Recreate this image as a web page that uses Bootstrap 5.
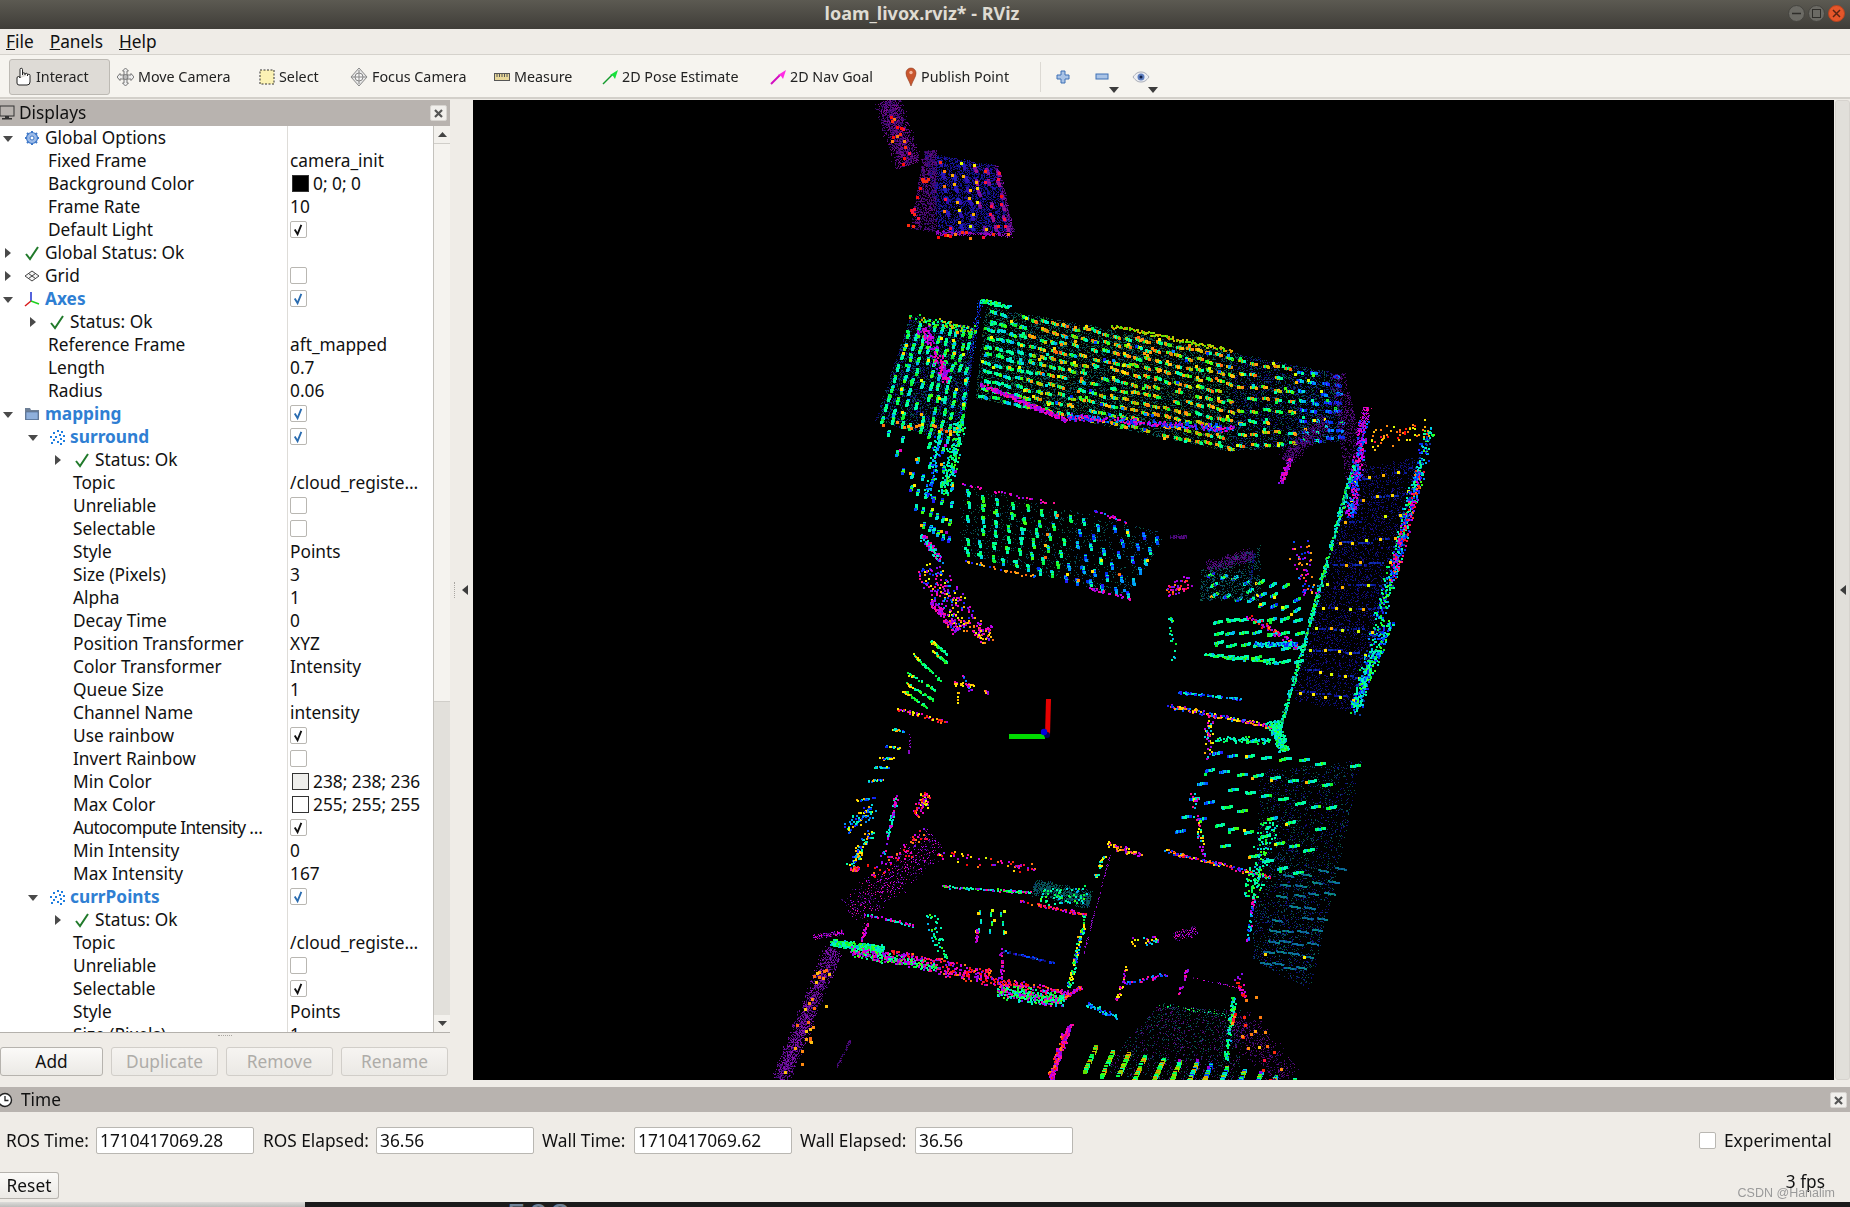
<!DOCTYPE html>
<html lang="en">
<head>
<meta charset="UTF-8">
<title>loam_livox.rviz* - RViz</title>
<link href="https://cdn.jsdelivr.net/npm/bootstrap@5.3.0/dist/css/bootstrap.min.css" rel="stylesheet">
<style>
    html, body { width: 1850px; height: 1207px; overflow: hidden; margin: 0; background: #1b1b1b; }
    body { font-family: "Noto Sans", "Liberation Sans", sans-serif; font-size: 17.3px; color: #111; }
    .flex-none { flex: none; }
    .qt-win { height: 1202px; background: #efece7; }
    .title-bar { height: 29px; background: linear-gradient(#5c5a52, #3f3d38); color: #dfdbd2; font-weight: 700; font-size: 18px; }
    .title-text { left: 0; right: 0; top: 0; line-height: 27px; text-align: center; transform: translateX(-3px); }
    .win-btn { width: 17px; height: 17px; border-radius: 50%; background: #6b6a64; border: 1px solid #45443f; color: #35342f; }
    .win-btn.is-close { background: #e5562a; border-color: #b8431f; }
    .win-btns { top: 5px; right: 5px; gap: 3px; }
    .menu-bar { height: 26px; border-bottom: 1px solid #d5d2cc; gap: 16px; padding-left: 6px; line-height: 25px; }
    .tool-bar { height: 44px; background: #f6f4ef; border-bottom: 2px solid #d3d0ca; padding: 4px 0 0 9px; font-size: 14.3px; color: #222; }
    .tool-btn { height: 36px; padding: 0; gap: 4px; white-space: nowrap; flex: none; }
    .tool-btn.is-on { width: 101px; padding-left: 5px; background: #dedbd6; border: 1px solid #bdbab4; border-radius: 3px; }
    .tb-move { width: 142px; margin-left: 7px; }
    .tb-select { width: 91px; } .tb-focus { width: 144px; } .tb-measure { width: 108px; }
    .tb-pose { width: 168px; } .tb-goal { width: 135px; } .tb-pin { width: 135px; }
    .tool-sep { width: 1px; height: 30px; background: #dcd9d3; margin-top: 3px; }
    .tb-plus { margin: 11px 0 0 15px; } .tb-minus { margin: 14px 0 0 25px; } .tb-eye { margin: 11px 0 0 23px; }
    .tb-d1 { left: 1109px; top: 32px; } .tb-d2 { left: 1148px; top: 32px; }
    .drop-tri { position: absolute; width: 0; height: 0; border-left: 5px solid transparent; border-right: 5px solid transparent; border-top: 6px solid #3c3c3c; }
    .main-row { height: 980px; margin-top: 1px; }
    .dock-left { width: 450px; }
    .dock-head { height: 26px; background: #b8b3af; line-height: 26px; }
    .dock-close { right: 3px; top: 5px; width: 17px; height: 16px; background: #f1efec; border: 1px solid #d8d5d1; border-radius: 2px; }
    .scr-ic { margin-left: -1px; }
    .tree-box { height: 907px; background: #fff; border-bottom: 1px solid #b4b1ac; overflow: hidden; }
    .tree-rows { width: 433px; }
    .tree-row { height: 23px; line-height: 23px; }
    .name-cell { width: 287px; white-space: nowrap; }
    .name-squeeze { letter-spacing: -.65px; }
    .val-cell { width: 146px; border-left: 1px solid #dedcd8; padding-left: 2px; white-space: nowrap; overflow: hidden; }
    .d0 { padding-left: 3px; } .d1 { padding-left: 28px; } .d2 { padding-left: 53px; }
    .p1 { padding-left: 48px; } .p2 { padding-left: 73px; }
    .tri-r, .tri-d { flex: none; width: 10px; height: 10px; position: relative; }
    .tri-r::after, .tri-d::after { content: ""; position: absolute; width: 0; height: 0; }
    .tri-r::after { left: 2px; top: 0; border-left: 6px solid #4a4a4a; border-top: 5px solid transparent; border-bottom: 5px solid transparent; }
    .tri-d::after { left: 0; top: 3px; border-top: 6px solid #4a4a4a; border-left: 5px solid transparent; border-right: 5px solid transparent; }
    .tree-icon { flex: none; width: 16px; height: 16px; margin-left: 11px; margin-right: 5px; }
    .is-blue { color: #2f7fd3; font-weight: 700; }
    .form-check-input.pchk { width: 17px; height: 17px; margin: 3px 0 0 0; border: 1px solid #b9b7b2; border-radius: 2px; background-color: #fff; display: block; opacity: 1; }
    .form-check-input.pchk:checked { background-color: #fff; border-color: #b9b7b2; background-size: 15px; background-image: url("data:image/svg+xml,%3csvg xmlns='http://www.w3.org/2000/svg' viewBox='0 0 16 16'%3e%3cpath fill='none' stroke='%23111' stroke-width='2' d='M4 8l3 5 4-10'/%3e%3c/svg%3e"); }
    .form-check-input.pchk.chk-blue:checked { background-image: url("data:image/svg+xml,%3csvg xmlns='http://www.w3.org/2000/svg' viewBox='0 0 16 16'%3e%3cpath fill='none' stroke='%232a6cb0' stroke-width='2' d='M4 8l3 5 4-10'/%3e%3c/svg%3e"); }
    .swatch { display: inline-block; flex: none; width: 17px; height: 17px; margin: 0 4px 0 2px; border: 1px solid #333; }
    .swatch-min { background: #eeeeec; }
    .vscroll { width: 17px; background: #e2e0db; border-left: 1px solid #c4c2bd; }
    .vs-arrow { height: 17px; background: #f3f1ed; flex: none; }
    .vs-thumb { height: 559px; background: #f5f3ef; border-bottom: 1px solid #d0cec9; border-top: 1px solid #d0cec9; }
    .grip-dots { height: 14px; }
    .grip-dots i { width: 14px; border-top: 1px dotted #a9a6a1; margin-top: 2px; }
    .qt-btn { height: 29px; padding: 0; font-size: 17.3px; line-height: 26px; background: linear-gradient(#fbfaf8, #ebe9e5); border: 1px solid #b6b3ae; border-radius: 3px; color: #111; }
    .qt-btn:disabled { opacity: 1; color: #aeaca8; background: linear-gradient(#f6f4f1, #ebe9e5); border-color: #d1cec9; }
    .add-btn { width: 103px; }
    .btn-strip { gap: 8px; } .btn-strip .btn:not(.add-btn) { width: 107px; }
    .side-split { width: 23px; }
    .side-split .tri-l, .right-split .tri-l { width: 0; height: 0; border-right: 6px solid #3c3c3c; border-top: 5px solid transparent; border-bottom: 5px solid transparent; }
    .side-split .tri-l { margin-left: 7px; }
    .split-dots { height: 16px; border-left: 1px dotted #a9a6a1; margin-left: 4px; }
    .right-split { width: 15px; margin-left: 1px; background: #e1dfda; border-radius: 3px; border: 1px solid #d6d3ce; }
    .view-3d { display: block; background: #000; }
    .time-head { height: 25px; margin-top: 7px; background: #b8b3af; line-height: 25px; }
    .clock-ic { margin-left: -2px; margin-right: 7px; }
    .time-row { height: 27px; margin-top: 15px; padding-left: 6px; white-space: nowrap; }
    .form-control.time-field { width: 158px; height: 27px; flex: none; padding: 0 3px; font-size: 17.3px; line-height: 25px; color: #111; border: 1px solid #b9b7b2; border-radius: 2px; font-family: inherit; }
    .lbl-a { width: 90px; } .lbl-b { width: 113px; margin-left: 9px; } .lbl-c { width: 92px; margin-left: 8px; } .lbl-d { width: 115px; margin-left: 8px; }
    .form-check-input.pchk.exp-chk { margin: 0 0 0 626px; flex: none; }
    .reset-row { height: 27px; margin-top: 18px; }
    .qt-btn.reset-btn { width: 59px; height: 27px; border-left: 0; border-radius: 0 3px 3px 0; line-height: 24px; }
    .fps-text { right: 25px; top: 1172px; line-height: 20px; }
    .water-mark { right: 15px; top: 1185px; font: 12.5px "Liberation Sans", sans-serif; color: #9a9a9a; line-height: 16px; }
    .desk-strip { height: 5px; overflow: hidden; }
    .desk-lite { width: 305px; background: linear-gradient(#dcdcda, #bdbdbb); }
    .desk-term { font: 34px/26px "Liberation Sans", sans-serif; letter-spacing: 3px; color: #6f8296; padding-left: 202px; background: #1b1b1b; }
</style>
</head>
<body>
<svg class="d-none" xmlns="http://www.w3.org/2000/svg">
    <defs>
        <linearGradient id="screenGrad" x1="0" x2="1" y1="0" y2="0"><stop offset="0" stop-color="#c33"/><stop offset=".5" stop-color="#6a6"/><stop offset="1" stop-color="#46c"/></linearGradient>
    </defs>
    <symbol id="ic-gear" viewBox="0 0 16 16"><circle cx="8" cy="8" r="5.5" fill="#9cbbe8" stroke="#3f78c8" stroke-width="1.2"/><circle cx="8" cy="8" r="2" fill="#fff" stroke="#3f78c8"/><path stroke="#3f78c8" stroke-width="2" d="M8 1v2M8 13v2M1 8h2M13 8h2M3 3l1.500 1.500M11.500 11.500L13 13M3 13l1.500-1.500M11.500 4.500L13 3"/></symbol>
    <symbol id="ic-check" viewBox="0 0 16 16"><path fill="none" stroke="#217a2b" stroke-width="2" d="M2 9l4 5 8-12"/></symbol>
    <symbol id="ic-grid" viewBox="0 0 16 16"><path fill="#f4f4f4" stroke="#444" d="M8 3l7 5-7 5-7-5zM4.500 5.500l7 5M11.500 5.500l-7 5"/></symbol>
    <symbol id="ic-axes" viewBox="0 0 16 16"><path stroke="#1c2fd0" stroke-width="1.500" d="M7 1v10"/><path stroke="#d81b1b" stroke-width="1.500" d="M7 10l-6 5"/><path stroke="#1ed11e" stroke-width="1.500" d="M7 10l8 3"/></symbol>
    <symbol id="ic-folder" viewBox="0 0 16 16"><path fill="#6d7f96" d="M1 2h5l1 2h8v10H1z"/><path fill="#8fb0dc" stroke="#4d6a92" stroke-width=".6" d="M2 6h12v7.500H2z"/></symbol>
    <symbol id="ic-cloud" viewBox="0 0 16 16"><path fill="#1f7ee0" d="M8 1h2v2H8zM12 2h2v2h-2zM4 3h2v2H4zM10 5h2v2h-2zM14 6h2v2h-2zM1 7h2v2H1zM6 7h2v2H6zM11 9h2v2h-2zM4 10h2v2H4zM14 11h2v2h-2zM8 12h2v2H8zM2 13h2v2H2zM11 14h2v2h-2z"/></symbol>
    <symbol id="ic-hand" viewBox="0 0 17 20"><path fill="#fff" stroke="#222" d="M5 11V2.500a1.200 1.200 0 0 1 2.500 0V8m0-1a1.200 1.200 0 0 1 2.500 0v1m0-.5a1.200 1.200 0 0 1 2.500 0V9m0-.5a1.200 1.200 0 0 1 2.500 0V15a3 3 0 0 1-3 3H4a2 2 0 0 1-2-2v-5a1.500 1.500 0 0 1 3 0"/></symbol>
    <symbol id="ic-move" viewBox="0 0 17 20"><path fill="#eee" stroke="#777" d="M8.500 1l3 3H10v4h4V6.500l3 3.500-3 3.500V12h-4v4h1.500l-3 3-3-3H7v-4H3v1.500L0 10l3-3.500V8h4V4H5.500z"/><circle cx="8.500" cy="10" r="2.500" fill="#bbb" stroke="#777"/></symbol>
    <symbol id="ic-select" viewBox="0 0 16 16"><rect x="1" y="1" width="14" height="14" fill="#fbf2b4" stroke="#333" stroke-dasharray="2 1.500"/></symbol>
    <symbol id="ic-focus" viewBox="0 0 18 20"><path fill="#e8e8e8" stroke="#888" d="M9 1l8 9-8 9-8-9z"/><circle cx="9" cy="10" r="4" fill="#f6f6f6" stroke="#888"/><path stroke="#888" d="M9 3v14M2 10h14"/></symbol>
    <symbol id="ic-ruler" viewBox="0 0 16 8"><rect x=".5" y=".5" width="15" height="7" fill="#e8d89a" stroke="#555"/><path stroke="#555" d="M3 1v3M5.500 1v3M8 1v3M10.500 1v3M13 1v3"/></symbol>
    <symbol id="ic-pose" viewBox="0 0 16 16"><path stroke="#139a2c" stroke-width="1.500" d="M1 15L10 6"/><path fill="#17e13c" d="M16 1l-3 9-2-3-3-1z"/></symbol>
    <symbol id="ic-goal" viewBox="0 0 16 16"><path stroke="#d20ec0" stroke-width="2" d="M1 15L10 6"/><path fill="#ff2be4" d="M16 1l-3 9-2-3-3-1z"/></symbol>
    <symbol id="ic-pin" viewBox="0 0 12 20"><path fill="#c9562e" stroke="#8e3a1e" stroke-width=".6" d="M6 19C4 13 1 10 1 6a5 5 0 0 1 10 0c0 4-3 7-5 13z"/><circle cx="6" cy="5.500" r="1.700" fill="#f4b79e"/></symbol>
    <symbol id="ic-plus" viewBox="0 0 14 14"><path fill="#a9c3e6" stroke="#3f71b5" d="M5 1h4v4h4v4H9v4H5V9H1V5h4z"/></symbol>
    <symbol id="ic-minus" viewBox="0 0 14 8"><rect x="1" y="1" width="12" height="5" fill="#a9c3e6" stroke="#3f71b5"/></symbol>
    <symbol id="ic-eye" viewBox="0 0 18 14"><path fill="#eceef3" stroke="#a9adb8" d="M1 7c3-4 5-5 8-5s5 1 8 5c-3 4-5 5-8 5S4 11 1 7z"/><circle cx="9" cy="7" r="3.500" fill="#5f7fc0"/><circle cx="9" cy="7" r="1.500" fill="#10204a"/></symbol>
    <symbol id="ic-screen" viewBox="0 0 16 16"><rect x="1" y="1" width="14" height="10" fill="url(#screenGrad)" stroke="#333"/><path fill="#333" d="M6 11h4v2h3v1.500H3V13h3z"/></symbol>
    <symbol id="ic-clock" viewBox="0 0 16 16"><circle cx="7" cy="8" r="6.500" fill="#fff" stroke="#222" stroke-width="1.400"/><path fill="none" stroke="#222" stroke-width="1.300" d="M7 4v4.500h3.500"/></symbol>
</svg>

<div class="qt-win d-flex flex-column position-relative">
    <div class="title-bar position-relative flex-none">
        <div class="title-text position-absolute">loam_livox.rviz* - RViz</div>
        <div class="win-btns position-absolute d-flex">
            <div class="win-btn d-flex align-items-center justify-content-center"><svg width="9" height="9" viewBox="0 0 9 9"><path stroke="#2f2e2a" stroke-width="1.500" d="M0 4.500h9"/></svg></div>
            <div class="win-btn d-flex align-items-center justify-content-center"><svg width="9" height="9" viewBox="0 0 9 9"><rect x=".5" y=".5" width="8" height="8" fill="none" stroke="#2f2e2a"/></svg></div>
            <div class="win-btn is-close d-flex align-items-center justify-content-center"><svg width="9" height="9" viewBox="0 0 9 9"><path stroke="#5a2413" stroke-width="1.500" d="M1 1l7 7M8 1l-7 7"/></svg></div>
        </div>
    </div>

    <div class="menu-bar d-flex">
        <span><u>F</u>ile</span>
        <span><u>P</u>anels</span>
        <span><u>H</u>elp</span>
    </div>

    <div class="tool-bar d-flex position-relative">
        <div class="tool-btn is-on d-flex align-items-center"><svg width="17" height="20"><use href="#ic-hand"/></svg><span>Interact</span></div>
        <div class="tool-btn tb-move d-flex align-items-center"><svg width="17" height="20"><use href="#ic-move"/></svg><span>Move Camera</span></div>
        <div class="tool-btn tb-select d-flex align-items-center"><svg width="16" height="16"><use href="#ic-select"/></svg><span>Select</span></div>
        <div class="tool-btn tb-focus d-flex align-items-center"><svg width="18" height="20"><use href="#ic-focus"/></svg><span>Focus Camera</span></div>
        <div class="tool-btn tb-measure d-flex align-items-center"><svg width="16" height="8"><use href="#ic-ruler"/></svg><span>Measure</span></div>
        <div class="tool-btn tb-pose d-flex align-items-center"><svg width="16" height="16"><use href="#ic-pose"/></svg><span>2D Pose Estimate</span></div>
        <div class="tool-btn tb-goal d-flex align-items-center"><svg width="16" height="16"><use href="#ic-goal"/></svg><span>2D Nav Goal</span></div>
        <div class="tool-btn tb-pin d-flex align-items-center"><svg width="12" height="20"><use href="#ic-pin"/></svg><span>Publish Point</span></div>
        <div class="tool-sep"></div>
        <svg class="tb-plus" width="14" height="14"><use href="#ic-plus"/></svg>
        <svg class="tb-minus" width="14" height="8"><use href="#ic-minus"/></svg>
        <svg class="tb-eye" width="18" height="14"><use href="#ic-eye"/></svg>
        <div class="drop-tri tb-d1"></div>
        <div class="drop-tri tb-d2"></div>
    </div>

    <div class="main-row d-flex">
        <div class="dock-left d-flex flex-column flex-none">
            <div class="dock-head position-relative d-flex align-items-center">
                <svg width="16" height="16" class="me-1 scr-ic"><use href="#ic-screen"/></svg><span>Displays</span>
                <div class="dock-close position-absolute d-flex align-items-center justify-content-center"><svg width="9" height="9" viewBox="0 0 9 9"><path stroke="#555" stroke-width="2.200" d="M1 1l7 7M8 1l-7 7"/></svg></div>
            </div>
            <div class="tree-box d-flex">
                <div class="tree-rows">
                    <div class="tree-row d-flex"><div class="name-cell d0 d-flex align-items-center"><i class="tri-d"></i><svg class="tree-icon"><use href="#ic-gear"/></svg>Global Options</div><div class="val-cell"></div></div>
                    <div class="tree-row d-flex"><div class="name-cell p1">Fixed Frame</div><div class="val-cell">camera_init</div></div>
                    <div class="tree-row d-flex"><div class="name-cell p1">Background Color</div><div class="val-cell d-flex align-items-center"><span class="swatch bg-black"></span>0; 0; 0</div></div>
                    <div class="tree-row d-flex"><div class="name-cell p1">Frame Rate</div><div class="val-cell">10</div></div>
                    <div class="tree-row d-flex"><div class="name-cell p1">Default Light</div><div class="val-cell"><input class="form-check-input pchk" type="checkbox" checked></div></div>
                    <div class="tree-row d-flex"><div class="name-cell d0 d-flex align-items-center"><i class="tri-r"></i><svg class="tree-icon"><use href="#ic-check"/></svg>Global Status: Ok</div><div class="val-cell"></div></div>
                    <div class="tree-row d-flex"><div class="name-cell d0 d-flex align-items-center"><i class="tri-r"></i><svg class="tree-icon"><use href="#ic-grid"/></svg>Grid</div><div class="val-cell"><input class="form-check-input pchk" type="checkbox"></div></div>
                    <div class="tree-row d-flex"><div class="name-cell d0 d-flex align-items-center is-blue"><i class="tri-d"></i><svg class="tree-icon"><use href="#ic-axes"/></svg>Axes</div><div class="val-cell"><input class="form-check-input pchk chk-blue" type="checkbox" checked></div></div>
                    <div class="tree-row d-flex"><div class="name-cell d1 d-flex align-items-center"><i class="tri-r"></i><svg class="tree-icon"><use href="#ic-check"/></svg>Status: Ok</div><div class="val-cell"></div></div>
                    <div class="tree-row d-flex"><div class="name-cell p1">Reference Frame</div><div class="val-cell">aft_mapped</div></div>
                    <div class="tree-row d-flex"><div class="name-cell p1">Length</div><div class="val-cell">0.7</div></div>
                    <div class="tree-row d-flex"><div class="name-cell p1">Radius</div><div class="val-cell">0.06</div></div>
                    <div class="tree-row d-flex"><div class="name-cell d0 d-flex align-items-center is-blue"><i class="tri-d"></i><svg class="tree-icon"><use href="#ic-folder"/></svg>mapping</div><div class="val-cell"><input class="form-check-input pchk chk-blue" type="checkbox" checked></div></div>
                    <div class="tree-row d-flex"><div class="name-cell d1 d-flex align-items-center is-blue"><i class="tri-d"></i><svg class="tree-icon"><use href="#ic-cloud"/></svg>surround</div><div class="val-cell"><input class="form-check-input pchk chk-blue" type="checkbox" checked></div></div>
                    <div class="tree-row d-flex"><div class="name-cell d2 d-flex align-items-center"><i class="tri-r"></i><svg class="tree-icon"><use href="#ic-check"/></svg>Status: Ok</div><div class="val-cell"></div></div>
                    <div class="tree-row d-flex"><div class="name-cell p2">Topic</div><div class="val-cell">/cloud_registe…</div></div>
                    <div class="tree-row d-flex"><div class="name-cell p2">Unreliable</div><div class="val-cell"><input class="form-check-input pchk" type="checkbox"></div></div>
                    <div class="tree-row d-flex"><div class="name-cell p2">Selectable</div><div class="val-cell"><input class="form-check-input pchk" type="checkbox"></div></div>
                    <div class="tree-row d-flex"><div class="name-cell p2">Style</div><div class="val-cell">Points</div></div>
                    <div class="tree-row d-flex"><div class="name-cell p2">Size (Pixels)</div><div class="val-cell">3</div></div>
                    <div class="tree-row d-flex"><div class="name-cell p2">Alpha</div><div class="val-cell">1</div></div>
                    <div class="tree-row d-flex"><div class="name-cell p2">Decay Time</div><div class="val-cell">0</div></div>
                    <div class="tree-row d-flex"><div class="name-cell p2">Position Transformer</div><div class="val-cell">XYZ</div></div>
                    <div class="tree-row d-flex"><div class="name-cell p2">Color Transformer</div><div class="val-cell">Intensity</div></div>
                    <div class="tree-row d-flex"><div class="name-cell p2">Queue Size</div><div class="val-cell">1</div></div>
                    <div class="tree-row d-flex"><div class="name-cell p2">Channel Name</div><div class="val-cell">intensity</div></div>
                    <div class="tree-row d-flex"><div class="name-cell p2">Use rainbow</div><div class="val-cell"><input class="form-check-input pchk" type="checkbox" checked></div></div>
                    <div class="tree-row d-flex"><div class="name-cell p2">Invert Rainbow</div><div class="val-cell"><input class="form-check-input pchk" type="checkbox"></div></div>
                    <div class="tree-row d-flex"><div class="name-cell p2">Min Color</div><div class="val-cell d-flex align-items-center"><span class="swatch swatch-min"></span>238; 238; 236</div></div>
                    <div class="tree-row d-flex"><div class="name-cell p2">Max Color</div><div class="val-cell d-flex align-items-center"><span class="swatch bg-white"></span>255; 255; 255</div></div>
                    <div class="tree-row d-flex"><div class="name-cell p2 name-squeeze">Autocompute Intensity …</div><div class="val-cell"><input class="form-check-input pchk" type="checkbox" checked></div></div>
                    <div class="tree-row d-flex"><div class="name-cell p2">Min Intensity</div><div class="val-cell">0</div></div>
                    <div class="tree-row d-flex"><div class="name-cell p2">Max Intensity</div><div class="val-cell">167</div></div>
                    <div class="tree-row d-flex"><div class="name-cell d1 d-flex align-items-center is-blue"><i class="tri-d"></i><svg class="tree-icon"><use href="#ic-cloud"/></svg>currPoints</div><div class="val-cell"><input class="form-check-input pchk chk-blue" type="checkbox" checked></div></div>
                    <div class="tree-row d-flex"><div class="name-cell d2 d-flex align-items-center"><i class="tri-r"></i><svg class="tree-icon"><use href="#ic-check"/></svg>Status: Ok</div><div class="val-cell"></div></div>
                    <div class="tree-row d-flex"><div class="name-cell p2">Topic</div><div class="val-cell">/cloud_registe…</div></div>
                    <div class="tree-row d-flex"><div class="name-cell p2">Unreliable</div><div class="val-cell"><input class="form-check-input pchk" type="checkbox"></div></div>
                    <div class="tree-row d-flex"><div class="name-cell p2">Selectable</div><div class="val-cell"><input class="form-check-input pchk" type="checkbox" checked></div></div>
                    <div class="tree-row d-flex"><div class="name-cell p2">Style</div><div class="val-cell">Points</div></div>
                    <div class="tree-row d-flex"><div class="name-cell p2">Size (Pixels)</div><div class="val-cell">1</div></div>
                </div>
                <div class="vscroll d-flex flex-column">
                    <div class="vs-arrow d-flex align-items-center justify-content-center"><svg width="9" height="5"><path fill="#444" d="M4.500 0L9 5H0z"/></svg></div>
                    <div class="vs-thumb"></div>
                    <div class="flex-grow-1"></div>
                    <div class="vs-arrow d-flex align-items-center justify-content-center"><svg width="9" height="5"><path fill="#444" d="M4.500 5L9 0H0z"/></svg></div>
                </div>
            </div>
            <div class="grip-dots d-flex justify-content-center"><i></i></div>
            <div class="d-flex btn-strip">
                <button class="btn qt-btn add-btn" type="button">Add</button>
                <button class="btn qt-btn" type="button" disabled>Duplicate</button>
                <button class="btn qt-btn" type="button" disabled>Remove</button>
                <button class="btn qt-btn" type="button" disabled>Rename</button>
            </div>
        </div>
        <div class="side-split d-flex align-items-center"><div class="split-dots"></div><div class="tri-l"></div></div>
        <canvas id="view3d" class="view-3d" width="1361" height="980"></canvas>
        <div class="right-split d-flex align-items-center justify-content-center"><div class="tri-l"></div></div>
    </div>

    <div class="time-head position-relative d-flex align-items-center">
        <svg width="16" height="16" class="clock-ic"><use href="#ic-clock"/></svg><span>Time</span>
        <div class="dock-close position-absolute d-flex align-items-center justify-content-center"><svg width="9" height="9" viewBox="0 0 9 9"><path stroke="#555" stroke-width="2.200" d="M1 1l7 7M8 1l-7 7"/></svg></div>
    </div>
    <div class="time-row d-flex align-items-center">
        <span class="lbl-a">ROS Time:</span>
        <input class="form-control time-field" type="text" value="1710417069.28">
        <span class="lbl-b">ROS Elapsed:</span>
        <input class="form-control time-field" type="text" value="36.56">
        <span class="lbl-c">Wall Time:</span>
        <input class="form-control time-field" type="text" value="1710417069.62">
        <span class="lbl-d">Wall Elapsed:</span>
        <input class="form-control time-field" type="text" value="36.56">
        <input class="form-check-input pchk exp-chk" type="checkbox">
        <span class="ms-2">Experimental</span>
    </div>
    <div class="reset-row d-flex">
        <button class="btn qt-btn reset-btn" type="button">Reset</button>
    </div>
    <div class="fps-text position-absolute">3 fps</div>
    <div class="water-mark position-absolute">CSDN @Hanalim</div>
</div>
<div class="desk-strip d-flex">
    <div class="desk-lite"></div>
    <div class="desk-term flex-grow-1">503</div>
</div>

<script>
    // point cloud, drawn from rough outlines of the walls seen in the map
    const cv = document.getElementById("view3d");
    const ctx = cv.getContext("2d");
    ctx.fillStyle = "#000";
    ctx.fillRect(0, 0, cv.width, cv.height);
    ctx.translate(-473, -100);

    let seed = 71;
    function R() {
        seed = (seed + 0x6D2B79F5) | 0;
        let t = Math.imul(seed ^ (seed >>> 15), 1 | seed);
        t = (t + Math.imul(t ^ (t >>> 7), 61 | t)) ^ t;
        return ((t ^ (t >>> 14)) >>> 0) / 4294967296;
    }
    const pick = (a) => a[Math.floor(R() * a.length)];
    const lerp = (a, b, t) => [a[0] + (b[0] - a[0]) * t, a[1] + (b[1] - a[1]) * t];
    const quadAt = (q, u, v) => lerp(lerp(q[0], q[1], u), lerp(q[3], q[2], u), v);
    function put(x, y, s, c) {
        ctx.fillStyle = c;
        ctx.fillRect(Math.round(x), Math.round(y), s, s);
    }

    const HOT = ["#ff0a0a", "#ff2a10", "#ff7a10", "#ff1040"];
    const ORG = ["#ff8a10", "#ffa010", "#ff6a10", "#ffc010"];
    const YEL = ["#ffee00", "#ffd800", "#d8ff00", "#ffb000"];
    const GRN = ["#00ff50", "#00ff90", "#10f030", "#00ffb0", "#40ff10"];
    const CYN = ["#00d8e0", "#00f0c0", "#00b0f0", "#00ffa0"];
    const BLU = ["#0050ff", "#0030f0", "#2020ff", "#0090ff"];
    const MAG = ["#f000c0", "#c000f0", "#8010f0", "#ff1090", "#a000d0"];
    const OLV = ["#a0d000", "#d0c000", "#60e000", "#e09000"];
    const dPUR = ["#3c0a6c", "#50087a", "#2a0a60", "#640a80"];
    const dBLU = ["#0a0a7a", "#101090", "#0a1a6c", "#200a80"];
    const dTEA = ["#064a50", "#0a5a60", "#0a3a70", "#086048"];

    // origin of the crop the numbers were read from, at 3x scale; P is plain page coords
    const O8 = [860, 100], O9 = [920, 420], O10 = [770, 620], P = [0, 0];
    function line(o, x1, y1, x2, y2, w, n, cols, size) {
        const k = o === P ? 1 : 3;
        const ax = o[0] + x1 / k, ay = o[1] + y1 / k, bx = o[0] + x2 / k, by = o[1] + y2 / k;
        const len = Math.hypot(bx - ax, by - ay) || 1;
        const nx = -(by - ay) / len, ny = (bx - ax) / len;
        // bright hits come thicker than the dim haze
        if (size >= 2) { n = Math.round(n * 1.5); w *= 1.3; }
        for (let i = 0; i < n; i++) {
            const t = R(), off = (R() + R() - 1) * w / k;
            put(ax + (bx - ax) * t + nx * off, ay + (by - ay) * t + ny * off, size || 1, pick(cols));
        }
    }
    function haze(q, n, cols) {
        for (let i = 0; i < n; i++) {
            const p = quadAt(q, R(), R());
            put(p[0], p[1], 1, pick(cols));
        }
    }
    // regular rows of laser hits: a short streak with a brighter tip
    function lattice(q, nu, nv, o) {
        for (let i = 0; i < nu; i++) {
            for (let j = 0; j < nv; j++) {
                if (R() < (o.skip || 0)) continue;
                const u = (i + .5) / nu, v = (j + .5) / nv;
                const p = quadAt(q, u, v);
                const x = p[0] + (R() - .5) * 3, y = p[1] + (R() - .5) * 3;
                const body = o.body(u, v);
                const len = o.len || 4;
                for (let k = 0; k < len; k++) {
                    put(x + k * o.dx, y + k * o.dy, o.w || 2, pick(body));
                }
                if (R() < (o.head === undefined ? .5 : o.head)) {
                    put(x + (R() - .5) * 6, y + (R() - .5) * 6, 3, pick(o.tip(u, v)));
                }
            }
        }
    }

    // small wall and roof patch at the top
    line(P, 887, 100, 908, 165, 15, 1700, dPUR.concat("#7a0a90"), 1);
    line(P, 890, 112, 910, 160, 9, 10, HOT, 3);
    haze([[924, 152], [996, 165], [1012, 233], [938, 232]], 3600, dBLU.concat("#2a10a0", "#1818b0"));
    haze([[924, 150], [936, 150], [936, 232], [910, 228]], 1300, dPUR);
    line(P, 996, 165, 1012, 233, 3, 300, dPUR.concat("#8a10b0"), 1);
    line(P, 936, 232, 1012, 234, 3, 300, ["#a000c0", "#7010b0"], 1);
    lattice([[932, 152], [1000, 166], [1012, 232], [944, 230]], 6, 6, { dx: .4, dy: 1, len: 5, w: 3, skip: .1, head: 1, body: (u, v) => (u < .5 ? ["#2020c0", "#3010b0"] : ["#7010a0", "#a01090"]), tip: (u) => (u > .7 || u < .2 ? HOT : YEL) });
    line(P, 925, 170, 908, 228, 5, 10, HOT, 3);
    line(P, 936, 233, 1010, 234, 3, 7, HOT, 3);

    // long facade along the top
    const facade = [[985, 306], [1232, 351], [1232, 452], [975, 398]];
    haze(facade, 8000, dTEA.concat("#0a6a50", "#3a4a10"));
    lattice(facade, 24, 11, {
        dx: .9, dy: .35, len: 6, w: 3, skip: .06, head: .6,
        body: (u) => (u < .16 ? GRN.concat(CYN) : (u < .55 ? GRN.concat(OLV, CYN, ORG) : ORG.concat(OLV, GRN))),
        tip: (u) => (u < .3 ? YEL.concat(GRN, CYN) : GRN.concat(ORG, BLU, YEL))
    });
    line(O8, 360, 850, 620, 960, 6, 170, MAG, 2);
    line(O8, 620, 950, 1120, 985, 9, 200, MAG.concat(BLU), 2);
    line(O8, 360, 600, 450, 620, 5, 50, GRN.concat(CYN), 2);
    line(O8, 750, 675, 1115, 750, 5, 90, OLV, 2);
    line(O8, 360, 600, 300, 960, 10, 300, dBLU.concat(BLU), 1);

    // facade continued to the right
    const facade2 = [[1232, 352], [1338, 373], [1345, 440], [1232, 452]];
    haze(facade2, 3000, dBLU.concat(dTEA));
    lattice(facade2, 9, 8, {
        dx: .9, dy: .2, len: 6, w: 3, skip: .1, head: .55,
        body: (u) => (u < .6 ? GRN.concat(OLV, ORG) : (u < .8 ? CYN.concat(BLU) : BLU)),
        tip: () => GRN.concat(YEL, CYN)
    });
    haze([[1330, 372], [1345, 373], [1370, 480], [1345, 480]], 700, dPUR);

    // left wall
    const leftWall = [[910, 315], [975, 326], [962, 445], [875, 420]];
    haze(leftWall, 3500, dTEA.concat(dBLU));
    lattice(leftWall, 9, 10, {
        dx: -.3, dy: 1, len: 6, w: 3, skip: .08, head: .5,
        body: () => GRN.concat(CYN),
        tip: () => YEL.concat(GRN)
    });
    line(P, 922, 327, 948, 380, 5, 100, MAG, 2);
    line(P, 908, 315, 975, 330, 4, 50, GRN.concat(OLV), 2);
    line(P, 875, 422, 965, 430, 3, 8, ORG, 3);
    lattice([[878, 420], [962, 445], [950, 545], [925, 530]], 6, 6, { dx: -.3, dy: 1, len: 5, w: 3, skip: .12, head: .4, body: () => GRN.concat(CYN, BLU), tip: () => MAG.concat(YEL) });
    line(O9, 120, 0, 70, 220, 18, 120, GRN.concat(CYN), 2);
    line(O9, 60, 30, 20, 230, 12, 60, CYN.concat(BLU), 2);
    line(O9, 0, 340, 60, 420, 10, 60, CYN.concat(MAG), 2);

    // corridor in the middle
    const corridor = [[960, 483], [1166, 533], [1128, 597], [960, 552]];
    haze(corridor, 900, dTEA);
    lattice(corridor, 14, 6, {
        dx: .2, dy: 1, len: 6, w: 3, skip: .08, head: .5,
        body: (u) => (u < .55 ? GRN.concat(CYN) : CYN.concat(BLU)),
        tip: (u) => (u < .4 ? GRN : YEL.concat(ORG, BLU))
    });
    line(O9, 120, 190, 400, 250, 4, 18, MAG, 2);
    line(O9, 520, 270, 620, 305, 3, 14, MAG.concat(BLU), 2);
    line(O9, 130, 420, 350, 470, 6, 18, ORG.concat(BLU), 2);
    line(O9, 500, 500, 630, 535, 4, 18, MAG, 2);
    line(O9, 750, 350, 800, 350, 8, 80, dPUR, 1);

    // stairs, green bars
    const bars = [[480, 60, 535, 105], [485, 90, 528, 128], [425, 100, 510, 180], [410, 155, 495, 210], [405, 185, 490, 240], [398, 210, 470, 262]];
    bars.forEach((b) => line(O10, b[0], b[1], b[2], b[3], 3, 22, GRN, 2));
    bars.forEach((b) => line(O10, b[0], b[1], b[0] + 25, b[1] + 22, 4, 3, YEL, 2));
    line(O9, 20, 430, 130, 620, 42, 130, YEL.concat(BLU, MAG, MAG), 2);
    line(O9, 30, 540, 110, 630, 10, 50, MAG, 2);
    line(O9, 170, 600, 190, 670, 14, 20, MAG.concat(ORG), 2);
    line(O9, 160, 640, 215, 620, 8, 10, MAG, 2);
    line(O10, 550, 188, 610, 195, 5, 16, MAG.concat(ORG, YEL), 2);
    line(O10, 575, 160, 600, 210, 6, 8, BLU.concat(MAG), 2);
    line(O10, 565, 215, 560, 250, 3, 4, YEL, 2);
    line(O10, 640, 212, 660, 222, 3, 4, MAG.concat(ORG), 2);
    line(O10, 530, 0, 670, 50, 18, 20, MAG.concat(YEL, ORG), 2);

    // dashes down the left side
    line(O10, 380, 265, 530, 305, 5, 30, MAG.concat(YEL, HOT), 2);
    [[365, 325, 400, 332], [345, 375, 388, 383], [325, 412, 372, 415], [312, 438, 355, 440], [290, 483, 338, 475], [258, 540, 315, 530]].forEach((d) => line(O10, d[0], d[1], d[2], d[3], 3, 12, YEL.concat(BLU, CYN), 2));
    line(O10, 225, 625, 310, 560, 20, 45, BLU.concat(YEL, CYN), 2);
    line(O10, 240, 740, 300, 630, 14, 50, CYN.concat(BLU, YEL), 2);
    line(O10, 420, 340, 415, 400, 3, 24, ["#8010c0", "#a000d0"], 1);
    line(O10, 430, 580, 470, 520, 18, 40, MAG.concat(YEL, HOT), 2);
    line(O10, 380, 520, 340, 700, 6, 45, MAG.concat(CYN), 2);
    line(O10, 240, 745, 265, 745, 6, 18, MAG.concat(HOT), 2);

    // purple interior next to the long band
    line(O10, 240, 880, 500, 660, 60, 600, dPUR.concat(MAG), 1);
    line(O10, 300, 760, 470, 640, 24, 40, MAG.concat(HOT), 2);
    line(O10, 500, 700, 800, 745, 16, 34, MAG.concat(HOT, YEL), 2);
    line(O10, 130, 950, 220, 935, 10, 120, MAG.concat(dPUR), 1);
    line(O10, 280, 880, 430, 915, 4, 30, CYN.concat(MAG), 2);
    line(O10, 290, 910, 270, 960, 4, 12, MAG, 2);
    line(O10, 510, 798, 780, 815, 3, 60, MAG.concat(GRN, CYN), 2);
    line(O10, 750, 842, 945, 882, 4, 50, MAG.concat(HOT), 2);
    line(O10, 790, 800, 960, 840, 30, 900, dTEA, 1);
    line(O10, 810, 830, 950, 825, 25, 40, GRN.concat(CYN), 2);
    line(O10, 945, 880, 895, 1100, 7, 80, BLU.concat(YEL, GRN), 2);
    line(O10, 1020, 700, 940, 1000, 3, 70, ["#8010c0", "#a000d0"], 1);
    line(O10, 975, 770, 1000, 705, 6, 18, CYN.concat(YEL), 2);
    line(O10, 1010, 670, 1115, 705, 8, 34, MAG.concat(ORG, YEL), 2);
    line(O10, 700, 990, 850, 1027, 3, 30, BLU.concat(dBLU), 2);
    line(O10, 690, 980, 695, 1060, 4, 14, MAG, 2);
    line(O10, 480, 880, 520, 1020, 20, 30, GRN.concat(CYN), 2);
    lattice([[973, 907], [1007, 907], [1007, 933], [973, 933]], 3, 3, { dx: 0, dy: 1, len: 4, head: .7, body: () => CYN.concat(GRN), tip: () => YEL });
    line(O10, 620, 925, 615, 965, 3, 8, MAG, 2);

    // thick band at the bottom of the room
    line(O10, 180, 965, 340, 985, 9, 220, CYN.concat(GRN, GRN), 2);
    line(O10, 240, 990, 500, 1040, 14, 220, GRN.concat(MAG), 2);
    line(O10, 360, 990, 660, 1055, 8, 70, MAG.concat(HOT), 2);
    line(O10, 500, 1045, 900, 1125, 14, 170, MAG.concat(HOT), 2);
    line(O10, 680, 1110, 880, 1140, 20, 220, GRN.concat(CYN, GRN, MAG), 2);
    line(O10, 880, 1130, 935, 1095, 6, 34, MAG.concat(HOT), 2);

    // bottom left wall
    line(O10, 190, 985, 30, 1380, 32, 2000, ["#500a80", "#7010a0", "#8a10b0", "#3c0a6c"], 1);
    line(O10, 170, 1030, 60, 1370, 34, 18, ORG, 3);
    line(O10, 240, 1260, 200, 1340, 6, 70, dPUR, 1);

    // bottom middle
    line(O10, 900, 1210, 840, 1380, 5, 130, MAG, 2);
    line(O10, 880, 1240, 840, 1370, 8, 60, MAG.concat(HOT), 2);
    line(O10, 950, 1150, 1040, 1190, 6, 30, BLU.concat(CYN), 2);
    haze([[1158, 1005], [1240, 1010], [1240, 1100], [1100, 1070]], 1300, dTEA.concat(dPUR));
    lattice([[1087, 1045], [1300, 1078], [1300, 1078], [1087, 1045]], 13, 1, {
        dx: -.45, dy: 1, len: 26, w: 4, skip: 0, head: .3,
        body: (u) => (u < .45 ? OLV.concat(GRN, "#000") : GRN.concat(OLV, CYN, BLU, "#000")),
        tip: () => MAG
    });
    line(O10, 1160, 1150, 1390, 1190, 8, 60, dTEA.concat(GRN), 1);
    line(O10, 1390, 1130, 1365, 1320, 8, 70, GRN.concat(CYN), 2);
    line(O10, 1400, 1060, 1420, 1130, 10, 18, MAG.concat(HOT), 2);
    line(O10, 1070, 1030, 1040, 1140, 6, 18, MAG.concat(YEL), 2);
    line(O10, 1060, 1090, 1190, 1060, 5, 22, MAG.concat(BLU), 2);
    line(O10, 1225, 1120, 1250, 1045, 5, 12, MAG, 2);
    line(O10, 1260, 1070, 1400, 1100, 4, 24, dPUR.concat(MAG), 1);
    line(O10, 1210, 950, 1280, 930, 18, 110, dPUR.concat(MAG), 1);
    line(O10, 1080, 960, 1170, 960, 14, 18, CYN.concat(YEL, MAG), 2);
    line(O10, 1400, 1200, 1550, 1380, 60, 500, dPUR, 1);
    line(O10, 1400, 1150, 1520, 1370, 50, 16, ORG.concat(HOT), 3);

    // right side room
    const rightGrid = [[1350, 470], [1422, 455], [1355, 712], [1290, 700]];
    haze(rightGrid, 3000, dBLU);
    lattice(rightGrid, 4, 11, { dx: 1.2, dy: 0, len: 12, w: 2, skip: .2, head: 0, body: () => ["#0a20a0", "#0a1090", "#1030b0", "#000"], tip: () => BLU });
    lattice(rightGrid, 5, 11, { dx: 1, dy: 0, len: 1, w: 3, skip: .08, head: 0, body: () => YEL, tip: () => YEL });
    line(O9, 1300, 130, 1065, 970, 6, 320, GRN.concat(CYN, "#0a9a70", "#0a80a0"), 2);
    line(O9, 1330, 0, 1290, 290, 14, 170, MAG.concat(BLU), 2);
    line(O9, 1530, 20, 1300, 880, 16, 360, BLU.concat(CYN, GRN, "#0a40a0", "#1030a0"), 2);
    line(O9, 1500, 150, 1410, 480, 14, 120, MAG.concat(HOT, BLU), 2);
    line(O9, 1410, 600, 1300, 860, 14, 170, GRN.concat(CYN, BLU), 2);
    line(O9, 1350, 60, 1520, 20, 30, 34, YEL.concat(ORG, HOT), 2);
    line(O9, 1110, 110, 1080, 190, 8, 50, MAG, 2);
    line(O9, 1090, 120, 1220, 0, 30, 600, dPUR, 1);
    line(O9, 1130, 360, 1170, 520, 30, 40, MAG.concat(ORG, BLU), 2);
    line(O8, 1500, 1000, 1520, 920, 14, 160, MAG, 1);

    // lower middle rooms
    const lowGrid = [[1207, 615], [1300, 612], [1300, 670], [1205, 660]];
    lattice(lowGrid, 7, 4, { dx: 1.2, dy: -.3, len: 7, w: 3, skip: .05, head: .25, body: () => CYN.concat(GRN), tip: () => GRN });
    lattice([[1200, 570], [1300, 585], [1300, 615], [1205, 600]], 8, 3, { dx: 1, dy: -.6, len: 6, w: 3, skip: .1, head: .3, body: () => GRN.concat(CYN, BLU), tip: () => YEL });
    haze([[1200, 570], [1260, 545], [1260, 600], [1200, 600]], 700, dTEA);
    line(O9, 860, 440, 1000, 400, 22, 420, dPUR, 1);
    line(O9, 1000, 400, 990, 490, 3, 50, dBLU, 1);
    line(O9, 740, 520, 810, 480, 20, 30, MAG.concat(HOT), 2);
    line(O9, 750, 580, 760, 720, 8, 12, CYN.concat(GRN), 2);
    line(O9, 980, 580, 1130, 680, 10, 45, MAG.concat(HOT), 2);
    line(O9, 1000, 670, 1130, 670, 6, 90, CYN.concat(BLU), 2);
    line(O9, 850, 700, 1090, 730, 5, 70, CYN.concat(GRN), 2);
    line(O9, 770, 815, 960, 835, 3, 50, BLU.concat(CYN), 2);
    line(O9, 740, 855, 1060, 920, 6, 100, MAG.concat(YEL, BLU, ORG), 2);
    line(O9, 880, 955, 1050, 960, 8, 50, CYN.concat(GRN), 2);
    line(O9, 1060, 900, 1090, 990, 14, 90, CYN.concat(GRN), 2);
    line(O9, 870, 900, 860, 1015, 14, 28, CYN.concat(YEL, MAG), 2);
    line(O10, 1180, 690, 1500, 770, 5, 90, MAG.concat(HOT, YEL, BLU), 2);

    // big green and teal room bottom right
    haze([[1260, 770], [1362, 760], [1310, 990], [1252, 960]], 2400, dTEA.concat(dBLU));
    lattice([[1205, 745], [1365, 755], [1295, 885], [1165, 835]], 9, 6, { dx: 1.1, dy: -.2, len: 8, w: 3, skip: .1, head: .35, body: (u) => (u < .2 ? CYN.concat(BLU) : GRN.concat(CYN)), tip: () => YEL.concat(GRN) });
    lattice([[1275, 870], [1345, 860], [1300, 975], [1255, 965]], 4, 9, { dx: 1.2, dy: .2, len: 9, w: 2, skip: .15, head: .08, body: () => ["#0a70a0", "#0a5a90", "#0a8a80"], tip: () => YEL });
    line(O10, 1270, 510, 1300, 720, 10, 28, MAG.concat(YEL, CYN), 2);
    line(O10, 1450, 820, 1430, 960, 6, 34, BLU.concat(MAG, CYN), 2);
    line(O10, 1500, 300, 1540, 390, 14, 80, CYN.concat(GRN), 2);
    line(O10, 1440, 830, 1500, 600, 24, 100, GRN.concat(CYN), 2);

    // axes marker
    ctx.fillStyle = "#e60000";
    ctx.beginPath();
    ctx.moveTo(1046, 699); ctx.lineTo(1051, 699); ctx.lineTo(1050, 735); ctx.lineTo(1045, 735);
    ctx.fill();
    ctx.fillStyle = "#00dc00";
    ctx.fillRect(1009, 734, 36, 5);
    ctx.fillStyle = "#04045a";
    ctx.beginPath(); ctx.arc(1047, 735, 3, 0, 7); ctx.fill();
    ctx.fillStyle = "#0000e0";
    ctx.beginPath(); ctx.arc(1044, 732, 3.2, 0, 7); ctx.fill();
</script>
<script src="https://cdn.jsdelivr.net/npm/bootstrap@5.3.0/dist/js/bootstrap.bundle.min.js"></script>
</body>
</html>
